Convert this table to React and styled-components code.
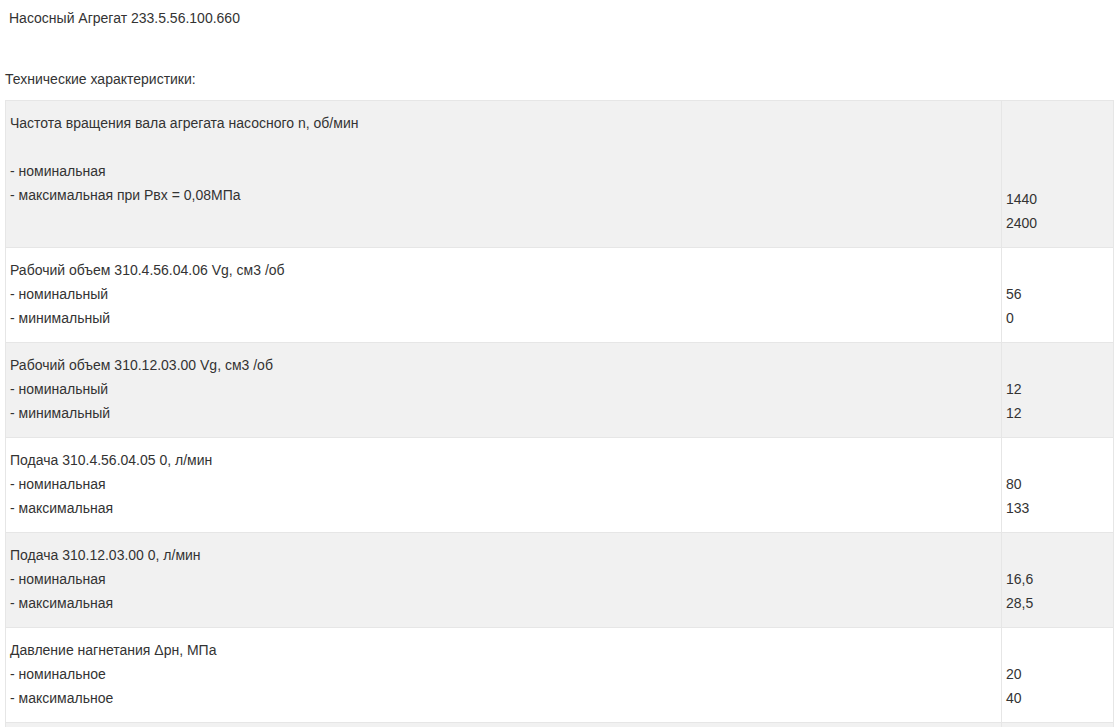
import React from 'react'
import styled, { createGlobalStyle } from 'styled-components'

const GlobalStyle = createGlobalStyle`
    html, body {
        margin: 0;
        padding: 0;
        background: #ffffff;
    }

    body {
        font-family: "Liberation Sans", Arial, sans-serif;
        font-size: 14px;
        line-height: 24px;
        color: #333333;
    }
`

const specs = [
    {
        left: ['Частота вращения вала агрегата насосного n, об/мин', '', '- номинальная', '- максимальная при Рвх = 0,08МПа'],
        right: ['', '', '', '1440', '2400'],
        extra: true,
    },
    {
        left: ['Рабочий объем 310.4.56.04.06 Vg, см3 /об', '- номинальный', '- минимальный'],
        right: ['', '56', '0'],
    },
    {
        left: ['Рабочий объем 310.12.03.00 Vg, см3 /об', '- номинальный', '- минимальный'],
        right: ['', '12', '12'],
    },
    {
        left: ['Подача 310.4.56.04.05 0, л/мин', '- номинальная', '- максимальная'],
        right: ['', '80', '133'],
    },
    {
        left: ['Подача 310.12.03.00 0, л/мин', '- номинальная', '- максимальная'],
        right: ['', '16,6', '28,5'],
    },
    {
        left: ['Давление нагнетания Δрн, МПа', '- номинальное', '- максимальное'],
        right: ['', '20', '40'],
    },
    {
        left: ['Мощность приводного электродвигателя, кВт', '- номинальная'],
        right: ['', '30'],
    },
]

const Lines = ({ items }) => items.map((line, i) => (
    <Line key={i}>{line || '\u00a0'}</Line>
))

const App = () => {
    return (
        <Page>
            <GlobalStyle />
            <Title>Насосный Агрегат 233.5.56.100.660</Title>
            <Caption>Технические характеристики:</Caption>
            <SpecTable>
                <tbody>
                    {specs.map((row, i) => (
                        <Row key={i} $shaded={i % 2 === 0}>
                            <NameCell>
                                <Lines items={row.left} />
                            </NameCell>
                            <ValueCell $extra={row.extra}>
                                <Lines items={row.right} />
                            </ValueCell>
                        </Row>
                    ))}
                </tbody>
            </SpecTable>
        </Page>
    )
}

export default App

export const Page = styled.div`
    padding: 6px 3px 0 5px;
`

export const Title = styled.p`
    margin: 0;
    padding-left: 4px;
`

export const Caption = styled.p`
    margin: 37px 0 9px 0;
`

export const SpecTable = styled.table`
    width: 100%;
    border-collapse: collapse;
    border-spacing: 0;
`

export const Row = styled.tr`
    background: ${p => (p.$shaded ? '#f1f1f1' : '#ffffff')};
`

const Cell = styled.td`
    border: 1px solid #e6e6e6;
    padding: 10px 4px 12px 4px;
`

export const NameCell = styled(Cell)`
    vertical-align: top;
`

export const ValueCell = styled(Cell)`
    width: 103px;
    vertical-align: bottom;
    padding-top: ${p => (p.$extra ? '14px' : '10px')};
`

export const Line = styled.div`
    line-height: 24px;
    white-space: nowrap;
`
